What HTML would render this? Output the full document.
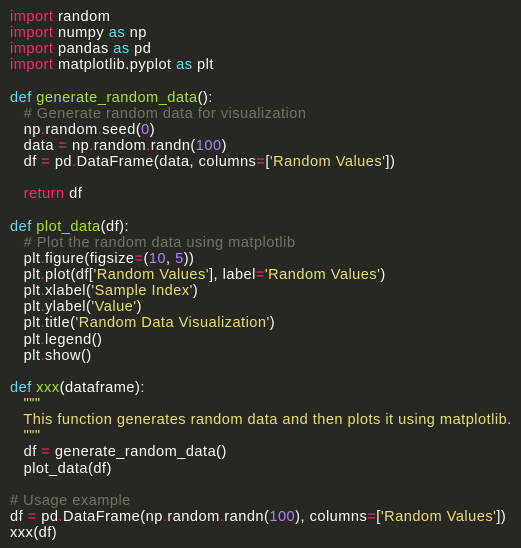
<!DOCTYPE html>
<html><head><meta charset="utf-8"><style>
html,body{margin:0;padding:0;background:#272822;width:521px;height:548px;overflow:hidden}
pre{margin:0;padding:9px 0 0 10px;font-family:"Liberation Sans",sans-serif;font-size:14.6px;line-height:16.12px;color:#f8f8f2;letter-spacing:0.48px;white-space:pre}
.k{color:#f92672}.b{color:#66d9ef}.f{color:#a6e22e}.c{color:#75715e}.s{color:#e6db74}.n{color:#ae81ff}
</style></head><body><pre><span class="k">import</span> random
<span class="k">import</span> numpy <span class="b">as</span> np
<span class="k">import</span> pandas <span class="b">as</span> pd
<span class="k">import</span> matplotlib.pyplot <span class="b">as</span> plt

<span class="b">def</span> <span class="f">generate_random_data</span>():
   <span class="c"># Generate random data for visualization</span>
   np<span class="k">.</span>random<span class="k">.</span>seed(<span class="n">0</span>)
   data <span class="k">=</span> np<span class="k">.</span>random<span class="k">.</span>randn(<span class="n">100</span>)
   df <span class="k">=</span> pd<span class="k">.</span>DataFrame(data, columns<span class="k">=</span>[<span class="s">'Random Values'</span>])

   <span class="k">return</span> df

<span class="b">def</span> <span class="f">plot_data</span>(df):
   <span class="c"># Plot the random data using matplotlib</span>
   plt<span class="k">.</span>figure(figsize<span class="k">=</span>(<span class="n">10</span>, <span class="n">5</span>))
   plt<span class="k">.</span>plot(df[<span class="s">'Random Values'</span>], label<span class="k">=</span><span class="s">'Random Values'</span>)
   plt<span class="k">.</span>xlabel(<span class="s">'Sample Index'</span>)
   plt<span class="k">.</span>ylabel(<span class="s">'Value'</span>)
   plt<span class="k">.</span>title(<span class="s">'Random Data Visualization'</span>)
   plt<span class="k">.</span>legend()
   plt<span class="k">.</span>show()

<span class="b">def</span> <span class="f">xxx</span>(dataframe):
   <span class="s">"""</span>
<span class="s">   This function generates random data and then plots it using matplotlib.</span>
<span class="s">   """</span>
   df <span class="k">=</span> generate_random_data()
   plot_data(df)

<span class="c"># Usage example</span>
df <span class="k">=</span> pd<span class="k">.</span>DataFrame(np<span class="k">.</span>random<span class="k">.</span>randn(<span class="n">100</span>), columns<span class="k">=</span>[<span class="s">'Random Values'</span>])
xxx(df)</pre></body></html>
